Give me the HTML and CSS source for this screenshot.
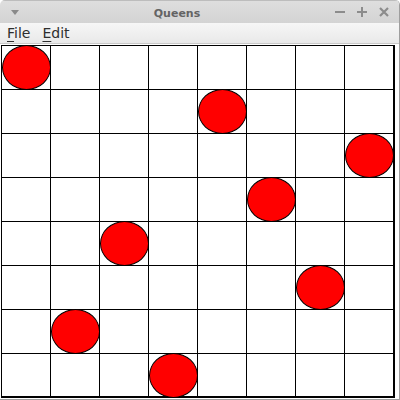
FILE: index.html
```html
<!DOCTYPE html>
<html>
<head>
<meta charset="utf-8">
<link rel="stylesheet" href="styles.css">
</head>
<body>
<div class="window">
  <div class="titlebar">
    <svg class="menu-arrow" width="8" height="5" viewBox="0 0 8 5"><polygon points="0,0 8,0 4,5" fill="#8a8a8a"/></svg>
    <div class="title">Queens</div>
    <div class="controls">
      <svg width="10" height="10" viewBox="0 0 10 10"><rect x="0" y="4" width="10" height="2" fill="#8c8c8c"/></svg>
      <svg width="10" height="10" viewBox="0 0 10 10"><rect x="0" y="4" width="10" height="2" fill="#8c8c8c"/><rect x="4" y="0" width="2" height="10" fill="#8c8c8c"/></svg>
      <svg width="10" height="10" viewBox="0 0 10 10"><path d="M1 1 L9 9 M9 1 L1 9" stroke="#8c8c8c" stroke-width="2.2"/></svg>
    </div>
  </div>
  <div class="menubar">
    <span class="menu-item"><u>F</u>ile</span>
    <span class="menu-item"><u>E</u>dit</span>
  </div>
  <div class="content">
    <div class="board">
      <div class="cell"><div class="queen"></div></div><div class="cell"></div><div class="cell"></div><div class="cell"></div><div class="cell"></div><div class="cell"></div><div class="cell"></div><div class="cell"></div>
      <div class="cell"></div><div class="cell"></div><div class="cell"></div><div class="cell"></div><div class="cell"><div class="queen"></div></div><div class="cell"></div><div class="cell"></div><div class="cell"></div>
      <div class="cell"></div><div class="cell"></div><div class="cell"></div><div class="cell"></div><div class="cell"></div><div class="cell"></div><div class="cell"></div><div class="cell"><div class="queen"></div></div>
      <div class="cell"></div><div class="cell"></div><div class="cell"></div><div class="cell"></div><div class="cell"></div><div class="cell"><div class="queen"></div></div><div class="cell"></div><div class="cell"></div>
      <div class="cell"></div><div class="cell"></div><div class="cell"><div class="queen"></div></div><div class="cell"></div><div class="cell"></div><div class="cell"></div><div class="cell"></div><div class="cell"></div>
      <div class="cell"></div><div class="cell"></div><div class="cell"></div><div class="cell"></div><div class="cell"></div><div class="cell"></div><div class="cell"><div class="queen"></div></div><div class="cell"></div>
      <div class="cell"></div><div class="cell"><div class="queen"></div></div><div class="cell"></div><div class="cell"></div><div class="cell"></div><div class="cell"></div><div class="cell"></div><div class="cell"></div>
      <div class="cell"></div><div class="cell"></div><div class="cell"></div><div class="cell"><div class="queen"></div></div><div class="cell"></div><div class="cell"></div><div class="cell"></div><div class="cell"></div>
    </div>
  </div>
</div>
</body>
</html>
```
FILE: styles.css
```css
html, body {
  margin: 0;
  padding: 0;
  background: #ffffff;
}
.window {
  width: 400px;
  height: 400px;
  box-sizing: border-box;
  border-right: 1px solid #9e9e9e;
  border-bottom: 1px solid #9e9e9e;
  border-radius: 5px 5px 0 0;
  overflow: hidden;
  display: flex;
  flex-direction: column;
  background: #ffffff;
}
.titlebar {
  height: 23px;
  flex: none;
  display: flex;
  align-items: center;
  background: linear-gradient(#dedede, #d3d3d3);
  border-top: 1px solid #bdbdbd;
  box-sizing: border-box;
  padding: 0 10px 0 11px;
}
.menu-arrow {
  display: block;
  margin-top: 1px;
}
.title {
  flex: 1;
  text-align: center;
  font-family: "DejaVu Sans", sans-serif;
  font-weight: bold;
  font-size: 11px;
  color: #646464;
  margin-top: 3px;
}
.controls {
  display: flex;
  gap: 12px;
  align-items: center;
}
.controls svg {
  display: block;
}
.menubar {
  height: 21px;
  flex: none;
  box-sizing: border-box;
  display: flex;
  align-items: center;
  padding-left: 1px;
  background: linear-gradient(#f6f6f6, #e9e9e9);
  border-bottom: 1px solid #c9c9c9;
  font-family: "DejaVu Sans", sans-serif;
  font-size: 14px;
  color: #2e2e2e;
}
.menu-item {
  padding: 0 6px;
  line-height: 20px;
}
.menu-item u {
  text-decoration-thickness: 1px;
  text-underline-offset: 3px;
}
.content {
  flex: 1;
  padding-top: 1px;
  padding-left: 1px;
  background: #ffffff;
}
.board {
  display: grid;
  grid-template-columns: repeat(8, 49px);
  grid-template-rows: repeat(7, 44px) 43px;
  width: max-content;
  border-right: 2px solid #000;
  border-bottom: 2px solid #000;
}
.cell {
  box-sizing: border-box;
  border-left: 1px solid #000;
  border-top: 1px solid #000;
  background: #ffffff;
}
.queen {
  box-sizing: border-box;
  width: 49px;
  height: 45px;
  margin-top: -1px;
  border: 1px solid #000;
  border-radius: 50%;
  background: #ff0000;
}
```
